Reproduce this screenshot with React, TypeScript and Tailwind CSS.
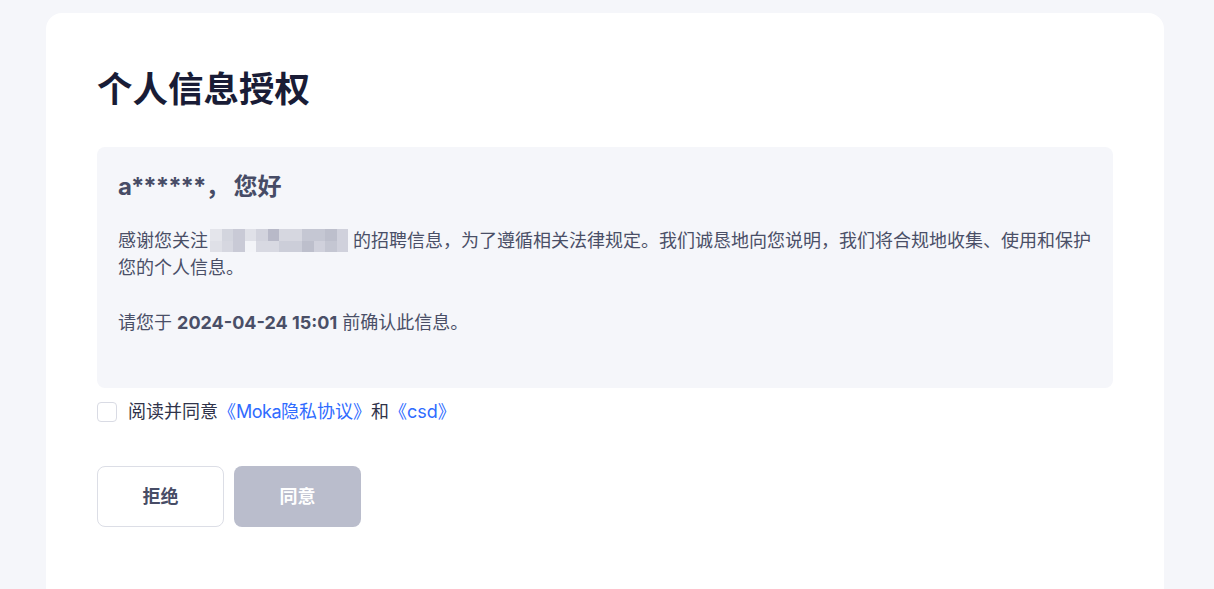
import React, { useState } from 'react';

const font = { fontFamily: '"Inter", "Noto Sans CJK SC", sans-serif' };

// pixelated patch that hides the company name
const mosaic = [
  '#e4e5eb', '#d3d5de', '#c9cad6', '#e0e1e8', '#d2d3dd', '#b8b9c8', '#d6d7e0', '#d6d7e0', '#c5c7d3', '#c5c7d3', '#bdbfcc', '#d0d1dc',
  '#dfe0e7', '#d6d7e0', '#c9cad6', '#f3f4f8', '#d8d9e2', '#d8d9e2', '#ccced9', '#ccced9', '#bdbfcc', '#d0d1dc', '#c4c6d2', '#d0d1dc',
];

const App: React.FC = () => {
  const [agreed, setAgreed] = useState(false);

  return (
    <div className="min-h-screen bg-[#f5f6fa] pt-[13px] overflow-hidden" style={font}>
      <div className="ml-[46px] w-[1118px] min-h-[600px] bg-white rounded-[16px] px-[51px] pt-[52px]">
        <h1 className="text-[35.5px] leading-[50px] font-bold text-[#191c36]">个人信息授权</h1>

        {/* Notice box */}
        <div className="mt-[32px] bg-[#f5f6fa] rounded-[8px] px-[21px] pt-[24px] pb-[52px]">
          <h2 className="text-[24px] leading-[32px] font-bold text-[#474c66]">
            <span className="tracking-[-1px]">a******</span>，<span className="ml-[4px]">您好</span>
          </h2>
          <div className="mt-[24px] text-[18px] leading-[27px] text-[#4a4f67]">
            <p>
              感谢您关注
              <span className="inline-block align-top w-[138px] h-[27px] ml-[2px] mr-[5px] pt-[2px]">
                <span className="grid grid-cols-12 h-[23px]">
                  {mosaic.map((c, i) => (
                    <span key={i} style={{ backgroundColor: c }} />
                  ))}
                </span>
              </span>
              的招聘信息，为了遵循相关法律规定。我们诚恳地向您说明，我们将合规地收集、使用和保护您的个人信息。
            </p>
            <p className="mt-[28px]">
              请您于 <span className="font-bold">2024-04-24 15:01</span> 前确认此信息。
            </p>
          </div>
        </div>

        {/* Consent */}
        <label className="mt-[10px] flex items-center h-[27px] text-[18px] text-[#30334a] cursor-pointer">
          <input
            type="checkbox"
            checked={agreed}
            onChange={(e) => setAgreed(e.target.checked)}
            className="appearance-none w-[20px] h-[20px] rounded-[4px] border border-[#d9dbe4] bg-white checked:bg-[#2f6bff] checked:border-[#2f6bff]"
          />
          <span className="ml-[11px]">阅读并同意</span>
          <a className="text-[#2f6bff]">
            《<span className="tracking-[-0.5px]">Moka</span>隐私协议》
          </a>
          <span>和</span>
          <a className="text-[#2f6bff]">《csd》</a>
        </label>

        {/* Actions */}
        <div className="mt-[41px] flex gap-[10px]">
          <button className="w-[127px] h-[61px] rounded-[8px] border border-[#dcdee6] bg-white text-[18px] font-bold text-[#474c66]">
            拒绝
          </button>
          <button
            disabled={!agreed}
            className={`w-[127px] h-[61px] rounded-[8px] text-[18px] font-bold text-white ${agreed ? 'bg-[#2f6bff]' : 'bg-[#babdcc]'}`}
          >
            同意
          </button>
        </div>
      </div>
    </div>
  );
};

export default App;
